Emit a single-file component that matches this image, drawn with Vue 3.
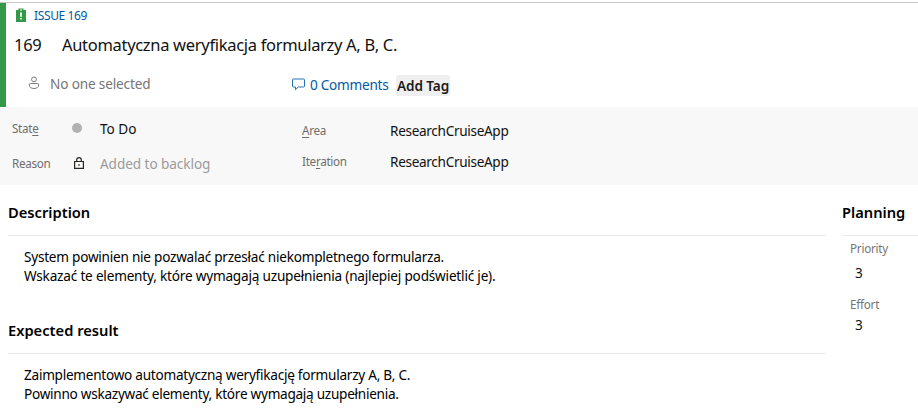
<script setup>
const sections = [
  {
    title: 'Description',
    key: 'description',
    lines: [
      'System powinien nie pozwalać przesłać niekompletnego formularza.',
      'Wskazać te elementy, które wymagają uzupełnienia (najlepiej podświetlić je).',
    ],
  },
  {
    title: 'Expected result',
    key: 'expected',
    lines: [
      'Zaimplementowo automatyczną weryfikację formularzy A, B, C.',
      'Powinno wskazywać elementy, które wymagają uzupełnienia.',
    ],
  },
]
</script>

<template>
  <div class="work-item">
    <header class="head">
      <div class="type-row">
        <svg class="issue-icon" width="10" height="14" viewBox="0 0 10 14">
          <path d="M0 2h2.500V.5h5V2H10v12H0z" fill="#339947" />
          <path d="M4 1.500h2v1H4z" fill="#fff" />
          <path d="M4 4.500h2L5.700 9H4.300zM4.200 10h1.600v1.600H4.200z" fill="#fff" />
        </svg>
        <span class="type-name">ISSUE 169</span>
      </div>
      <div class="title-row">
        <span class="number">169</span>
        <span class="title">Automatyczna weryfikacja formularzy A, B, C.</span>
      </div>
      <div class="meta-row">
        <svg class="person" width="12" height="14" viewBox="0 0 12 14" fill="none" stroke="#777">
          <circle cx="6" cy="3.400" r="2.400" />
          <path d="M2.600 7.500h6.800q1.300 0 1.300 1.400c0 2.300-2 3.600-4.700 3.600S1.300 11.200 1.300 8.900q0-1.400 1.300-1.400z" />
        </svg>
        <span class="assignee">No one selected</span>
        <svg class="bubble" width="13" height="13" viewBox="0 0 13 13" fill="none" stroke="#2372b5">
          <path d="M1.500 1h10q1 0 1 1v6q0 1-1 1H6.300L3.500 11.700V9h-2q-1 0-1-1V2q0-1 1-1z" />
        </svg>
        <span class="comments">0 Comments</span>
        <button class="tag">Add Tag</button>
      </div>
    </header>

    <div class="band">
      <div class="status">
        <div class="field">
          <span class="label">Stat<u>e</u></span>
          <span class="mark"><i class="dot"></i></span>
          <span class="value">To Do</span>
        </div>
        <div class="field">
          <span class="label">Reason</span>
          <span class="mark">
            <svg class="lock" width="10" height="12" viewBox="0 0 10 12" fill="none" stroke="#2b2522">
              <path d="M.6 4.500h8.800v6.900H.6zM2.700 4.500V2.800Q2.700.6 5 .6t2.300 2.200v1.700" stroke-width="1.200" />
              <path d="M4.300 7.200h1.400v1.500H4.300z" fill="#2b2522" stroke="none" />
            </svg>
          </span>
          <span class="value muted">Added to backlog</span>
        </div>
      </div>
      <div class="paths">
        <div class="field">
          <span class="label"><u>A</u>rea</span>
          <span class="value path">ResearchCruiseApp</span>
        </div>
        <div class="field">
          <span class="label">Ite<u>r</u>ation</span>
          <span class="value path">ResearchCruiseApp</span>
        </div>
      </div>
    </div>

    <main class="body">
      <div class="main-col">
        <section v-for="s in sections" :key="s.key" class="section">
          <h2>{{ s.title }}</h2>
          <div class="text">
            <p v-for="(line, i) in s.lines" :key="i" :class="s.key + i">{{ line }}</p>
          </div>
        </section>
      </div>
      <aside class="side">
        <h2>Planning</h2>
        <div class="plan-label priority">Priority</div>
        <div class="plan-value first">3</div>
        <div class="plan-label effort">Effort</div>
        <div class="plan-value">3</div>
      </aside>
    </main>
  </div>
</template>

<style>
body {
  background: #fff;
  overflow: hidden;
}
</style>

<style scoped>
.work-item {
  box-sizing: border-box;
  width: 918px;
  height: 411px;
  padding-top: 2px;
  overflow: hidden;
  font-family: "Noto Sans", "Open Sans", sans-serif;
  font-size: 13.600px;
  color: #111;
  white-space: nowrap;
}
.head {
  box-sizing: border-box;
  height: 105px;
  border-top: 1px solid #c8c8c8;
  position: relative;
  padding-left: 6px;
}
.head::before {
  content: "";
  position: absolute;
  left: 0;
  top: 0;
  width: 6px;
  height: 104px;
  background: #339947;
}
.type-row {
  display: flex;
  align-items: center;
  height: 25px;
  padding-left: 10px;
}
.issue-icon { margin-top: -1px; }
.type-name {
  margin-left: 8px;
  font-size: 12px;
  color: #005a9e;
  letter-spacing: -0.370px;
}
.title-row {
  box-sizing: border-box;
  display: flex;
  align-items: center;
  height: 34px;
  padding: 0 0 2px 8px;
  font-size: 16.500px;
}
.number {
  width: 48px;
  letter-spacing: -0.300px;
}
.title { letter-spacing: -0.310px; }
.meta-row {
  display: flex;
  align-items: center;
  height: 43px;
  padding-left: 22px;
}
.person { margin-top: -2px; }
.assignee {
  width: 242px;
  margin-left: 10px;
  color: #757575;
  letter-spacing: -0.150px;
}
.bubble { margin-top: 1px; }
.comments {
  width: 78px;
  margin: 1px 0 0 5px;
  color: #005a9e;
  letter-spacing: -0.260px;
}
.tag {
  width: 54px;
  height: 21px;
  margin: 4px 0 0 8px;
  padding: 1px 0 0;
  border: 0;
  border-radius: 2px;
  background: #efefef;
  color: #1c1c1c;
  font: 600 13.600px/20px "Noto Sans", sans-serif;
  letter-spacing: -0.100px;
}
.band {
  display: flex;
  height: 78px;
  background: #f8f8f8;
}
.status {
  width: 290px;
  padding: 4px 0 0 12px;
}
.status .field { height: 35px; }
.paths { padding-top: 8px; }
.paths .field { height: 31px; }
.field {
  display: flex;
  align-items: center;
}
.label {
  width: 60px;
  padding-bottom: 1px;
  font-size: 11.700px;
  letter-spacing: -0.300px;
  color: #6e6e6e;
}
.paths .label { width: 88px; }
.label u {
  text-decoration-thickness: 1px;
  text-underline-offset: 2px;
}
.mark {
  display: flex;
  width: 28px;
}
.dot {
  width: 10px;
  height: 10px;
  margin-top: -1px;
  border-radius: 50%;
  background: #b2b2b2;
}
.lock { margin-left: 2px; margin-top: -2px; }
.muted {
  color: #9b9b9b;
  letter-spacing: -0.070px;
}
.path { letter-spacing: -0.320px; }
.body {
  display: flex;
  justify-content: space-between;
  padding-left: 8px;
}
.main-col { width: 818px; }
.section { height: 118px; }
.side { width: 76px; }
h2 {
  box-sizing: border-box;
  height: 51px;
  margin: 0;
  padding-top: 14px;
  border-bottom: 1px solid #e9e9e9;
  font-size: 14.700px;
  line-height: 26px;
  font-weight: 600;
  color: #000;
}
.text { padding: 11px 0 0 16px; }
p {
  margin: 0;
  height: 19px;
  line-height: 19px;
  color: #000;
}
.description0 { letter-spacing: -0.240px; }
.description1 { letter-spacing: -0.200px; }
.expected0 { letter-spacing: -0.260px; }
.expected1 { letter-spacing: -0.270px; }
.plan-label {
  padding-left: 8px;
  font-size: 11.700px;
  letter-spacing: -0.250px;
  line-height: 18px;
  color: #757575;
}
.priority { margin-top: 3px; }
.first { margin-top: 6px; }
.effort { margin-top: 12px; }
.plan-value {
  padding-left: 13px;
  line-height: 20px;
}
.effort + .plan-value { margin-top: 2px; }
</style>
